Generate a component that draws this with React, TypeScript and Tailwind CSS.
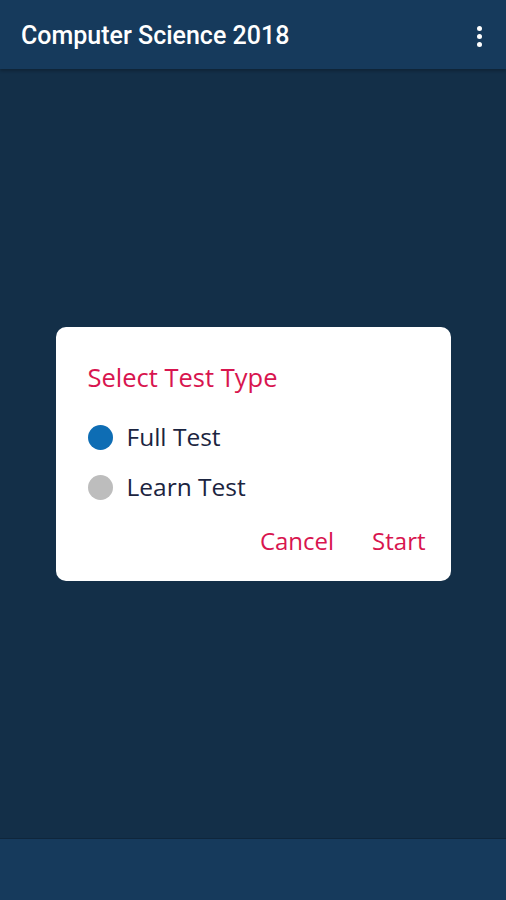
import { useState } from "react";

export default function App() {
  const [type, setType] = useState("full");

  return (
    <div className="flex h-[900px] w-[506px] flex-col bg-[#132f48] font-['Roboto',sans-serif]">
      <header className="flex h-[69px] items-center justify-between bg-[#163a5c] pl-[21px] pr-[24px] pt-[3px] shadow-[0_2px_3px_rgba(0,0,0,0.25)]">
        <h1 className="text-[25px] font-medium text-white">Computer Science 2018</h1>
        <div className="flex flex-col gap-[3px]">
          <span className="h-[5px] w-[5px] rounded-full bg-white" />
          <span className="h-[5px] w-[5px] rounded-full bg-white" />
          <span className="h-[5px] w-[5px] rounded-full bg-white" />
        </div>
      </header>

      <main className="flex flex-1 items-center justify-center">
        <div className="w-[395px] rounded-[10px] bg-white pb-[24px] pl-[32px] pr-[25px] pt-[34px] font-['Open_Sans','Noto_Sans',sans-serif]">
          <h2 className="text-[25.5px] leading-[32px] text-[#d8154f]">Select Test Type</h2>
          <div className="mt-[29px] flex flex-col gap-[18px]">
            {[
              { id: "full", label: "Full Test" },
              { id: "learn", label: "Learn Test" },
            ].map((o) => (
              <button key={o.id} onClick={() => setType(o.id)} className="flex h-[32px] items-center gap-[14px] text-left">
                <span
                  className={
                    type === o.id
                      ? "h-[25px] w-[25px] rounded-full bg-[#0e6db4]"
                      : "h-[25px] w-[25px] rounded-full bg-[#bdbdbd]"
                  }
                />
                <span className="text-[24.5px] text-[#1b2440]">{o.label}</span>
              </button>
            ))}
          </div>
          <div className="mt-[21px] flex justify-end gap-[38px]">
            <button className="text-[24px] leading-[32px] text-[#d8154f]">Cancel</button>
            <button className="text-[24px] leading-[32px] text-[#d8154f]">Start</button>
          </div>
        </div>
      </main>

      <footer className="h-[62px] border-t border-[#0f263b] bg-[#163a5c]" />
    </div>
  );
}
